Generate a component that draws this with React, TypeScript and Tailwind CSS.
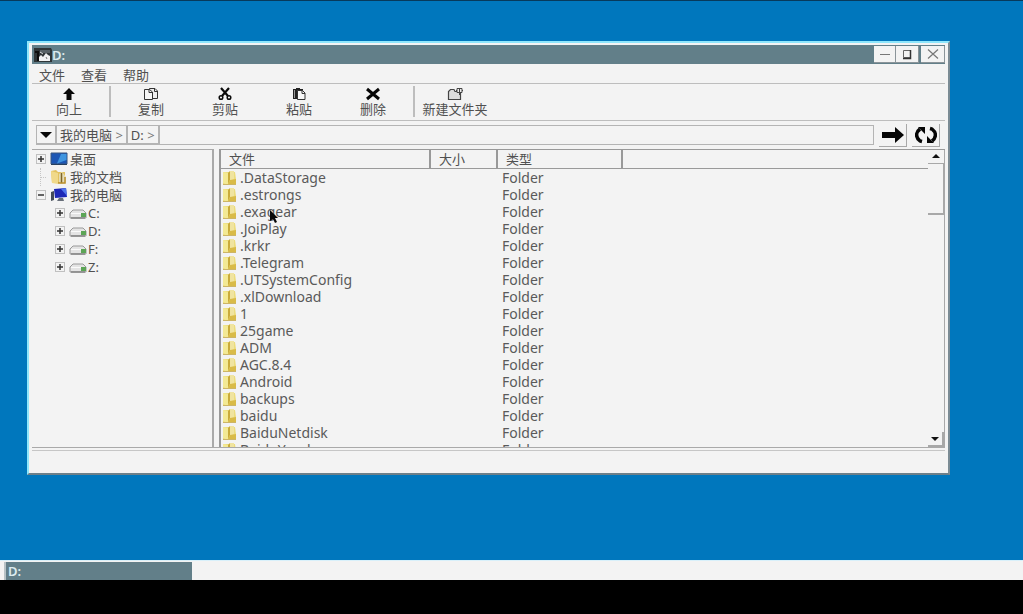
import type { ReactNode } from 'react';

const folders = [
  '.DataStorage',
  '.estrongs',
  '.exagear',
  '.JoiPlay',
  '.krkr',
  '.Telegram',
  '.UTSystemConfig',
  '.xlDownload',
  '1',
  '25game',
  'ADM',
  'AGC.8.4',
  'Android',
  'backups',
  'baidu',
  'BaiduNetdisk',
  'BaiduYuedu',
];

const menus = ['文件', '查看', '帮助'];
const drives = ['C:', 'D:', 'F:', 'Z:'];

function UpIcon() {
  return (
    <svg width="14" height="14" viewBox="0 0 14 14" aria-hidden="true">
      <path d="M7 1L13 7H9.500V13H4.500V7H1Z" fill="#080808" />
    </svg>
  );
}

function CopyIcon() {
  return (
    <svg width="16" height="14" viewBox="0 0 16 14" aria-hidden="true">
      <path d="M6.500 1.500H12L14.500 4V11.500H6.500Z" fill="#eee" stroke="#333" />
      <path d="M1.500 2.500H6.500L9.500 5V12.500H1.500Z" fill="#f6f6f6" stroke="#333" />
      <path d="M6 3V5.500H9M11.500 2V4.500H14" fill="none" stroke="#333" />
    </svg>
  );
}

function CutIcon() {
  return (
    <svg width="14" height="14" viewBox="0 0 14 14" aria-hidden="true" fill="none" stroke="#0a0a0a">
      <path d="M3 1L10 9M11 1L4 9" strokeWidth="2.200" />
      <circle cx="3" cy="10.500" r="1.800" strokeWidth="1.500" />
      <circle cx="11" cy="10.500" r="1.800" strokeWidth="1.500" />
    </svg>
  );
}

function PasteIcon() {
  return (
    <svg width="14" height="14" viewBox="0 0 14 14" aria-hidden="true">
      <path d="M1 2H4V1H8V2H11V12H1Z" fill="#222" />
      <path d="M2.500 3V11" stroke="#999" />
      <path d="M5.500 3.500H10.500L13 6V12.500H5.500Z" fill="#f8f8f8" stroke="#333" />
      <path d="M10 3.500V6.500H13" fill="none" stroke="#333" />
    </svg>
  );
}

function DeleteIcon() {
  return (
    <svg width="16" height="14" viewBox="0 0 16 14" aria-hidden="true">
      <path d="M2 2L14 12M14 2L2 12" stroke="#060606" strokeWidth="3" />
    </svg>
  );
}

function NewFolderIcon() {
  return (
    <svg width="18" height="14" viewBox="0 0 18 14" aria-hidden="true">
      <path d="M2.500 12.500V4.500L4.500 2.500H8L9 4.500H14.500V12.500Z" fill="#ddd" stroke="#444" strokeWidth="1.200" />
      <path d="M13.500 1V8M10 3.500H17" stroke="#444" />
      <path d="M11 1.500H16V5.500H11Z" fill="#eee" stroke="#444" />
      <path d="M13.500 1V8" stroke="#444" />
    </svg>
  );
}

function AppIcon() {
  return (
    <svg width="18" height="16" viewBox="0 0 18 16" aria-hidden="true">
      <path d="M0 1H17L18 3V15H0Z" fill="#2f3537" />
      <path d="M1 5H4V14" fill="none" stroke="#0c0c0c" strokeWidth="2" />
      <path d="M6 3H16V6H6Z" fill="#596266" />
      <path d="M5 14V10L7 8L9 10L12 6L14 8L16 9V14Z" fill="#f2f2f2" />
      <path d="M6 5L9 7" stroke="#ddd" />
      <path d="M12 10L13 12" stroke="#777" />
    </svg>
  );
}

function DesktopIcon() {
  return (
    <svg width="18" height="14" viewBox="0 0 18 14" aria-hidden="true">
      <path d="M1 1H17V12H1Z" fill="#1c56b4" stroke="#3b567e" />
      <path d="M7 11.500L11 2H16.500V8Z" fill="#3f95e0" />
      <path d="M1 12.500H17" stroke="#27405e" />
    </svg>
  );
}

function DocumentsIcon() {
  return (
    <svg width="18" height="16" viewBox="0 0 18 16" aria-hidden="true">
      <path d="M1 2L6 1L8 3H15V14H2Z" fill="#e2c260" />
      <path d="M1 2L8 4V15L2 14Z" fill="#f0d98a" />
      <path d="M9 5L12 3L16 8V14L11 15L9 13Z" fill="#e6dcb4" />
      <path d="M11.500 4V14" stroke="#7d6628" strokeWidth="1.500" />
      <path d="M15 8V14H8" fill="none" stroke="#b98e2d" strokeWidth="1.500" />
    </svg>
  );
}

function ComputerIcon() {
  return (
    <svg width="18" height="14" viewBox="0 0 18 14" aria-hidden="true">
      <path d="M1 4L4 3V12L1 13Z" fill="#444c58" />
      <path d="M4 1L16 0L17 9L5 10Z" fill="#1d28b6" />
      <path d="M11 1L16 0L17 8Z" fill="#4f74ed" />
      <path d="M9 10H13L14 13H7Z" fill="#676e79" />
    </svg>
  );
}

function DriveIcon() {
  return (
    <svg width="18" height="12" viewBox="0 0 18 12" aria-hidden="true">
      <path d="M1 6L4 3H14L17 6V11H1Z" fill="#e4e4e4" stroke="#999" />
      <path d="M2 6.500H12" stroke="#fafafa" />
      <path d="M12 6H17V10H12Z" fill="#5ca556" />
      <path d="M2 11H16" stroke="#666" />
    </svg>
  );
}

function FolderIcon() {
  return (
    <svg width="15" height="16" viewBox="0 0 15 16" aria-hidden="true" className="shrink-0">
      <path d="M1 2H13L14 9V14H1Z" fill="#ecdc7c" />
      <path d="M1 2L6 3V15L1 13Z" fill="#f3e995" />
      <path d="M6 3L8 1V10L6 14Z" fill="#c9ab3a" />
      <path d="M8 1H12V9L8 11Z" fill="#f0e4a0" />
      <path d="M6 14L8 10L14 9V14Z" fill="#d9bb48" />
      <path d="M1 14.500H14" stroke="#cdb566" />
    </svg>
  );
}

const tools: { label: string; icon: ReactNode; divider?: boolean }[] = [
  { label: '向上', icon: <UpIcon />, divider: true },
  { label: '复制', icon: <CopyIcon /> },
  { label: '剪贴', icon: <CutIcon /> },
  { label: '粘贴', icon: <PasteIcon /> },
  { label: '删除', icon: <DeleteIcon />, divider: true },
  { label: '新建文件夹', icon: <NewFolderIcon /> },
];

function Expander({ open = false }: { open?: boolean }) {
  return (
    <button
      aria-label={open ? 'Collapse' : 'Expand'}
      className="flex size-[10px] shrink-0 items-center justify-center border border-[#c0c0c0] bg-[#f3f3f3]"
    >
      <svg width="6" height="6" viewBox="0 0 6 6" aria-hidden="true">
        <path d={open ? 'M0 3H6' : 'M0 3H6M3 0V6'} stroke="#333" strokeWidth="1.500" />
      </svg>
    </button>
  );
}

function TitleBar() {
  const control =
    'flex h-[17px] items-center justify-center border-r border-b border-[#8b9499] bg-[#f3f3f3]';
  return (
    <header className="flex h-[19px] shrink-0 items-center bg-[#627f89] pl-[2px]">
      <AppIcon />
      <h1 className="flex-1 text-[13px] leading-4 font-semibold text-[#dcebef]">D:</h1>
      <div className="flex items-center">
        <button aria-label="Minimize" className={`${control} w-[22px]`}>
          <svg width="12" height="12" viewBox="0 0 12 12" aria-hidden="true">
            <path d="M1 6.500H11" stroke="#777" />
          </svg>
        </button>
        <button aria-label="Maximize" className={`${control} w-[23px]`}>
          <svg width="12" height="12" viewBox="0 0 12 12" aria-hidden="true">
            <path d="M2.500 2.500H9.500V9.500H2.500Z" fill="none" stroke="#666" />
            <path d="M9.500 2V10.500H2" fill="none" stroke="#333" strokeWidth="1.500" />
          </svg>
        </button>
        <button aria-label="Close" className={`${control} ml-[2px] w-[24px]`}>
          <svg width="12" height="12" viewBox="0 0 12 12" aria-hidden="true">
            <path d="M1 1.500L11 10.500M11 1.500L1 10.500" stroke="#777" strokeWidth="1.200" />
          </svg>
        </button>
      </div>
    </header>
  );
}

function Toolbar() {
  return (
    <div className="flex h-[37px] shrink-0 border-b border-[#bdbdbd]">
      {tools.map((tool) => (
        <div key={tool.label} className="flex">
          <button className="flex w-[74px] flex-col items-center pt-[3px] text-[13px] leading-4 whitespace-nowrap">
            {tool.icon}
            <span>{tool.label}</span>
          </button>
          {tool.divider && <span className="mx-[3px] mt-[2px] h-[31px] w-[2px] bg-[#bdbdbd]" />}
        </div>
      ))}
    </div>
  );
}

function AddressBar() {
  const crumb = 'h-full border-r-2 border-b border-[#b4b4b4] px-[3px] text-[13px] leading-4 whitespace-nowrap';
  return (
    <div className="flex h-7 shrink-0 items-center gap-[5px] pr-[5px] pl-1">
      <div className="flex h-5 min-w-0 flex-1 border border-[#b4b4b4]">
        <button aria-label="History" className={`${crumb} flex w-[20px] items-center justify-center`}>
          <svg width="12" height="8" viewBox="0 0 12 8" aria-hidden="true">
            <path d="M0 1H12L6 7Z" fill="#080808" />
          </svg>
        </button>
        <button className={crumb}>
          我的电脑 <span className="text-[#777]">&gt;</span>
        </button>
        <button className={crumb}>
          D: <span className="text-[#777]">&gt;</span>
        </button>
        <input aria-label="Address" className="min-w-0 flex-1 bg-transparent px-1 text-[13px] outline-none" />
      </div>
      <button
        aria-label="Go"
        className="flex h-[23px] w-[28px] items-center justify-center border-r border-b border-[#a8a8a8]"
      >
        <svg width="22" height="16" viewBox="0 0 22 16" aria-hidden="true">
          <path d="M0 5H13V0L22 8L13 16V11H0Z" fill="#050505" />
        </svg>
      </button>
      <button
        aria-label="Refresh"
        className="flex h-[23px] w-[28px] items-center justify-center border-r border-b border-[#a8a8a8]"
      >
        <svg width="22" height="18" viewBox="0 0 22 18" aria-hidden="true" fill="none">
          <path d="M7 15.500L5 15C0 11 1 6 5 3" stroke="#050505" strokeWidth="3.500" />
          <path d="M15 2.500L17 3C22 7 21 12 17 15" stroke="#050505" strokeWidth="3.500" />
          <path d="M3 1H10V8ZM19 17H12V10Z" fill="#050505" />
        </svg>
      </button>
    </div>
  );
}

function FolderTree() {
  return (
    <nav aria-label="Folders" className="w-[182px] shrink-0 border-t border-r-2 border-[#a9a9a9] pl-1">
      <ul className="text-[13px] leading-[18px]">
        <li className="flex items-center">
          <Expander />
          <span className="flex h-[18px] items-center gap-[2px] pl-1">
            <DesktopIcon />
            桌面
          </span>
        </li>
        <li className="flex items-center">
          <span className="ml-[4px] flex h-[18px] w-[6px] shrink-0 items-center border-l border-dotted border-[#c6c6c6]">
            <span className="w-full border-t border-dotted border-[#c6c6c6]" />
          </span>
          <span className="flex h-[18px] items-center gap-[2px] pl-1">
            <DocumentsIcon />
            我的文档
          </span>
        </li>
        <li>
          <div className="flex items-center">
            <Expander open />
            <span className="flex h-[18px] items-center gap-[2px] pl-1">
              <ComputerIcon />
              我的电脑
            </span>
          </div>
          <ul className="pl-[19px]">
            {drives.map((drive) => (
              <li key={drive} className="flex h-[18px] items-center">
                <Expander />
                <span className="flex h-[18px] items-center gap-px pl-1">
                  <DriveIcon />
                  {drive}
                </span>
              </li>
            ))}
          </ul>
        </li>
      </ul>
    </nav>
  );
}

function ScrollBar() {
  return (
    <div className="flex w-[17px] shrink-0 flex-col border-r border-[#a8a8a8]">
      <button
        aria-label="Scroll up"
        className="flex h-[14px] items-center justify-center border-b border-[#a8a8a8]"
      >
        <svg width="8" height="5" viewBox="0 0 8 5" aria-hidden="true">
          <path d="M0 4L4 0L8 4Z" fill="#111" />
        </svg>
      </button>
      <div className="h-[51px] border-r border-b-2 border-[#a8a8a8]" />
      <div className="flex-1" />
      <button
        aria-label="Scroll down"
        className="flex h-[15px] items-center justify-center border-r-2 border-b-2 border-[#a8a8a8]"
      >
        <svg width="8" height="5" viewBox="0 0 8 5" aria-hidden="true">
          <path d="M0 1L4 5L8 1Z" fill="#111" />
        </svg>
      </button>
    </div>
  );
}

function FileList() {
  const head = 'border-r-2 border-b border-[#999] px-2 py-0 text-left font-normal';
  return (
    <section className="relative ml-[5px] flex min-w-0 flex-1 border-t border-l-2 border-[#999]">
      <div className="min-w-0 flex-1 overflow-hidden">
        <table className="w-full table-fixed border-separate border-spacing-0">
          <thead>
            <tr className="h-[19px] text-[13px] leading-[18px]">
              <th className={`${head} w-[210px]`}>文件</th>
              <th className={`${head} w-[67px]`}>大小</th>
              <th className={`${head} w-[125px]`}>类型</th>
              <th className="border-b border-[#999] p-0" aria-label="Empty" />
            </tr>
          </thead>
          <tbody className="text-[14px] leading-[17px] text-[#5a5a5a]">
            {folders.map((name) => (
              <tr key={name} className="h-[17px]">
                <td className="p-0">
                  <span className="flex h-[17px] items-center gap-[3px] pl-px">
                    <FolderIcon />
                    {name}
                  </span>
                </td>
                <td className="p-0" />
                <td className="p-0 pl-1">Folder</td>
                <td className="p-0" />
              </tr>
            ))}
          </tbody>
        </table>
      </div>
      <ScrollBar />
      <svg
        width="10"
        height="14"
        viewBox="0 0 10 14"
        aria-hidden="true"
        className="absolute top-[60px] left-[48px]"
      >
        <path d="M1 0L9 8H6L8 12L6 13L4 9L1 11Z" fill="#080808" />
      </svg>
    </section>
  );
}

export default function App() {
  return (
    <div className="flex h-screen flex-col bg-black font-['Noto_Sans','Noto_Sans_CJK_SC',sans-serif] text-[#505050]">
      <main className="flex min-h-0 flex-1 flex-col border-t border-[#073a5c] bg-[#0077bd] pt-10 pr-[73px] pb-[85px] pl-[27px]">
        <div className="flex min-h-0 flex-1 flex-col border-2 border-t-[#8fe6fb] border-r-[#7b8b94] border-b-[#6d7f89] border-l-[#8fe6fb] bg-[#f3f3f3] px-[3px] pt-[2px]">
          <TitleBar />
          <div className="flex h-5 shrink-0 gap-4 border-b border-[#bdbdbd] pl-[7px]">
            {menus.map((menu) => (
              <button key={menu} className="pt-[3px] text-[13px] leading-4">
                {menu}
              </button>
            ))}
          </div>
          <Toolbar />
          <AddressBar />
          <div className="flex min-h-0 flex-1 overflow-hidden border-b border-[#a9a9a9]">
            <FolderTree />
            <FileList />
          </div>
          <footer className="mt-[2px] h-[23px] shrink-0 border-t border-[#c6c6c6]" />
        </div>
      </main>
      <footer className="flex h-5 shrink-0 border-t border-[#d8f0fa] bg-[#f3f3f3] pt-px pl-1">
        <button className="w-[188px] border-l-2 border-[#b8c2c6] bg-[#627f89] pl-[2px] text-left text-[13px] leading-[18px] font-semibold text-[#dcebef]">
          D:
        </button>
      </footer>
      <div className="h-[34px] shrink-0" />
    </div>
  );
}
